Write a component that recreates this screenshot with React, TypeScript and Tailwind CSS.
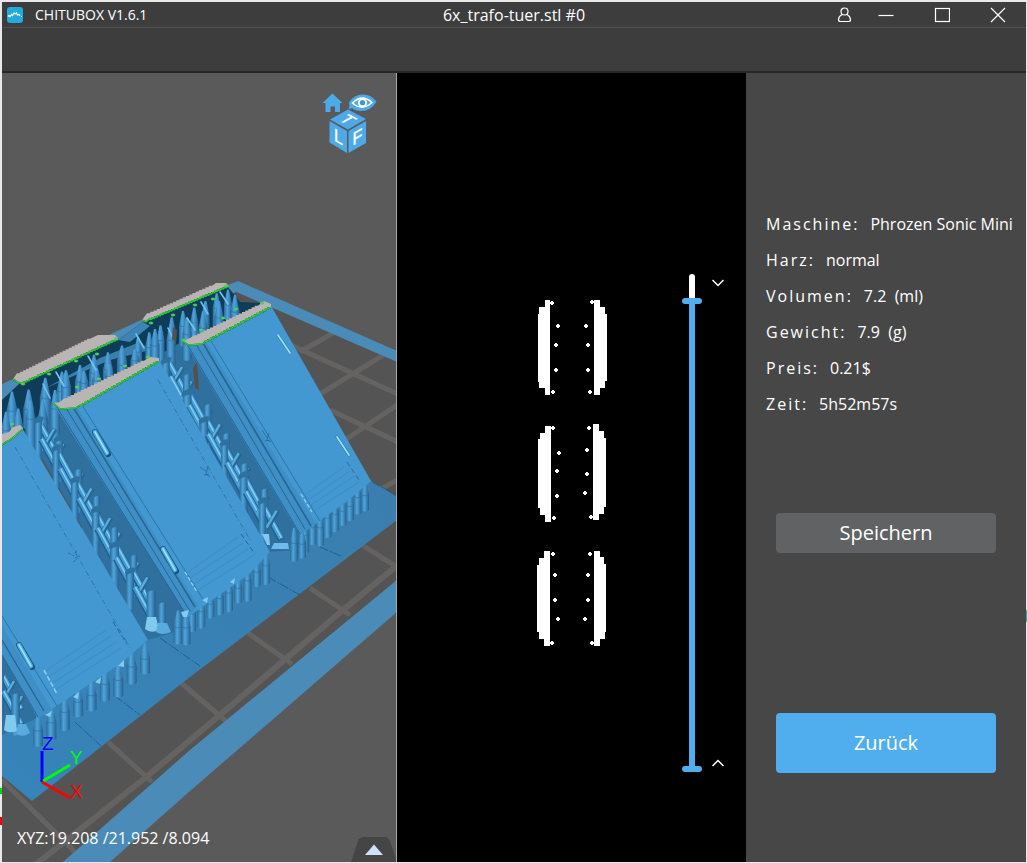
import { useState } from "react";
import type { ReactNode } from "react";

type Pt = [number, number];

const pts = (list: Pt[]) => list.map((p) => p.join(",")).join(" ");

/** Stair-stepped polyline between two points, as a sliced voxel edge looks. */
function stair(a: Pt, b: Pt, steps: number): Pt[] {
  const out: Pt[] = [];
  for (let i = 0; i < steps; i++) {
    const x0 = a[0] + ((b[0] - a[0]) * i) / steps;
    const x1 = a[0] + ((b[0] - a[0]) * (i + 1)) / steps;
    const y = a[1] + ((b[1] - a[1]) * (i + 0.5)) / steps;
    out.push([x0, y], [x1, y]);
  }
  return out;
}

const noise = (n: number) => {
  const v = Math.sin(n * 127.1 + 11.7) * 43758.5453;
  return v - Math.floor(v);
};

function Pillar({ x, y, h, w = 8 }: { x: number; y: number; h: number; w?: number }) {
  const r = w / 2;
  const tip = Math.min(w * 1.8, h * 0.5);
  return (
    <g>
      <path
        d={`M${x - 1} ${y} L${x + 1} ${y} L${x + r} ${y + tip} V${y + h} Q${x} ${y + h + 3} ${x - r} ${y + h} V${y + tip} Z`}
        fill="url(#pillar)"
      />
      <path d={`M${x - r} ${y + tip} Q${x} ${y + tip + 2.5} ${x + r} ${y + tip}`} stroke="#2b6c99" strokeWidth="0.6" fill="none" />
    </g>
  );
}

/** A flat-topped column with a tilted cap. */
function Column({ x, y, h, w = 8 }: { x: number; y: number; h: number; w?: number }) {
  const r = w / 2;
  return (
    <g>
      <path d={`M${x - r} ${y} L${x + r} ${y - 1} V${y + h} Q${x} ${y + h + 4} ${x - r} ${y + h} Z`} fill="url(#pillar)" />
      <path d={`M${x - r - 1} ${y + 1} Q${x - 1} ${y - 5} ${x + r + 2} ${y - 3} L${x + r} ${y + 3} Q${x} ${y + 1} ${x - r} ${y + 5} Z`} fill="#2e719f" />
    </g>
  );
}

/** Columns and diagonal braces filling the gap between two slabs. */
function Lattice({ a, b, span, count, seed }: { a: Pt; b: Pt; span: number; count: number; seed: number }) {
  const dx = (b[0] - a[0]) / count;
  const dy = (b[1] - a[1]) / count;
  return (
    <g>
      {Array.from({ length: count }, (_, i) => {
        const cx = a[0] + dx * i;
        const cy = a[1] + dy * i;
        const n = noise(seed + i);
        const m = noise(seed + i + 50);
        const side = i % 2 ? 1 : -1;
        const bx = cx - span * 0.3 - side * 4;
        return (
          <g key={i}>
            <line x1={bx} y1={cy + 1} x2={bx + 18} y2={cy + 34} stroke="#245f8a" strokeWidth="7" />
            <line x1={bx} y1={cy} x2={bx + 18} y2={cy + 33} stroke="#449bd3" strokeWidth="5" />
            <line x1={bx + 0.5} y1={cy} x2={bx + 18} y2={cy + 32} stroke="#86cff5" strokeWidth="1.5" />
            {i % 3 !== 2 && (
              <g>
                <line x1={cx + 11} y1={cy + 5} x2={cx + 1} y2={cy + 22} stroke="#286792" strokeWidth="5" />
                <line x1={cx + 10} y1={cy + 5} x2={cx} y2={cy + 22} stroke="#58aee1" strokeWidth="2.4" />
              </g>
            )}
            <Column x={cx + side * span * 0.22 + (n - 0.5) * 4} y={cy - 6 + m * 8} h={36 + n * 14} w={7 + m * 2} />
          </g>
        );
      })}
    </g>
  );
}

function PillarRow({ a, b, count, h, w = 7, seed = 0 }: { a: Pt; b: Pt; count: number; h: number; w?: number; seed?: number }) {
  return (
    <g>
      {Array.from({ length: count }, (_, i) => {
        const t = i / (count - 1);
        return (
          <Pillar
            key={i}
            x={a[0] + (b[0] - a[0]) * t}
            y={a[1] + (b[1] - a[1]) * t + (noise(seed + i) - 0.5) * 6}
            h={h + (noise(seed + i + 9) - 0.5) * 8}
            w={w}
          />
        );
      })}
    </g>
  );
}

function CutFace({ top, bottom }: { top: Pt[]; bottom: Pt[] }) {
  return (
    <g>
      <polygon points={pts([...top, ...[...bottom].reverse()])} fill="#b9b5b4" />
      <polyline points={pts(bottom)} fill="none" stroke="#1c7a30" strokeWidth="1.6" />
      <polyline points={pts(bottom)} fill="none" stroke="#2bdc33" strokeWidth="1" />
    </g>
  );
}

function Grip({ x, y, light = false }: { x: number; y: number; light?: boolean }) {
  return (
    <g strokeLinecap="round">
      {!light && <line x1={x} y1={y} x2={x + 13} y2={y + 22} stroke="#1c4f74" strokeWidth="6" />}
      <line x1={x} y1={y} x2={x + 12} y2={y + (light ? 18 : 21)} stroke={light ? "#2f78ab" : "#4ba6dd"} strokeWidth={light ? 3 : 4.6} />
      <line x1={x} y1={y} x2={x + 12} y2={y + (light ? 18 : 21)} stroke="#9be0fb" strokeWidth="1.8" />
    </g>
  );
}

function Scene() {
  return (
    <svg className="block h-full w-full" viewBox="2 73 394 789" preserveAspectRatio="xMidYMid slice" role="img" aria-label="3D">
      <defs>
        <linearGradient id="pillar" x1="0" x2="1" y1="0" y2="0">
          <stop offset="0" stopColor="#2b6b99" />
          <stop offset="0.4" stopColor="#51a4da" />
          <stop offset="0.65" stopColor="#3c8bc3" />
          <stop offset="1" stopColor="#275f88" />
        </linearGradient>
        <linearGradient id="raft" x1="0" x2="1" y1="1" y2="0">
          <stop offset="0" stopColor="#3684ba" />
          <stop offset="1" stopColor="#3a7eae" />
        </linearGradient>
        <clipPath id="bed">
          <polygon points="234,290 397,362 397,580 190,750 63,862 2,862 2,395" />
        </clipPath>
      </defs>
      <rect x="0" y="60" width="400" height="810" fill="#5a5a5a" />
      <polygon points="234,290 397,362 397,580 190,750 63,862 2,862 2,395" fill="#545454" />

      <g clipPath="url(#bed)" stroke="#656362" strokeWidth="5">
        <line x1="280" y1="340" x2="400" y2="395" />
        <line x1="330" y1="410" x2="400" y2="443" />
        <line x1="300" y1="352" x2="333" y2="333" />
        <line x1="320" y1="394" x2="385" y2="354" />
        <line x1="345" y1="440" x2="400" y2="403" />
        <line x1="380" y1="490" x2="400" y2="478" />
        <line x1="362" y1="545" x2="400" y2="569" />
        <line x1="310" y1="588" x2="350" y2="615" />
        <line x1="248" y1="633" x2="292" y2="664" />
        <line x1="180" y1="682" x2="227" y2="722" />
        <line x1="108" y1="742" x2="152" y2="782" />
        <line x1="2" y1="780" x2="75" y2="852" />
        <path d="M400 563 L343 610 L220 715 L145 778 L35 865" fill="none" strokeWidth="6" />
      </g>
      <g fill="#4a8bb7">
        <polygon points="238,281 397,351 397,362 234,291" />
        <polygon points="238,281 150,316 2,384 2,400 150,328 236,292" />
        <polygon points="397,580 190,750 63,862 110,862 190,791 397,612" />
      </g>

      <polygon points="2,560 200,480 370,480 397,497 397,520 190,677 32,801 2,776" fill="url(#raft)" />
      <g stroke="#1d567f" strokeWidth="0.8" strokeDasharray="9 2 2 1">
        <line x1="320" y1="547" x2="343" y2="557" />
        <line x1="268" y1="577" x2="300" y2="595" />
        <line x1="160" y1="638" x2="200" y2="666" />
        <line x1="115" y1="696" x2="140" y2="715" />
        <line x1="75" y1="722" x2="101" y2="746" />
        <line x1="372" y1="482" x2="395" y2="494" />
      </g>

      {/* undersides behind the front slabs */}
      <polygon points="2,400 20,383 118,340 143,322 228,287 240,302 262,303 190,345 160,357 120,372 60,402 26,430 2,440" fill="#0e3c59" />
      <polygon points="46,388 110,360 150,350 140,342 100,358" fill="#3b7fad" />
      <polygon points="118,340 143,322 150,326 130,342" fill="#3d83b3" />

      {/* lattice between slabs */}
      <polygon points="150,360 183,341 200,330 300,533 300,550 268,552" fill="#2f709f" />
      <polygon points="24,427 55,403 188,617 190,628 147,640" fill="#2f709f" />
      <polygon points="2,648 37,718 2,735" fill="#2f709f" />

      <PillarRow a={[12, 394]} b={[62, 372]} count={4} h={36} w={11} seed={3} />
      <PillarRow a={[66, 368]} b={[122, 344]} count={5} h={34} w={10} seed={7} />
      <PillarRow a={[138, 335]} b={[228, 290]} count={9} h={32} w={8} seed={13} />
      <PillarRow a={[6, 412]} b={[55, 392]} count={5} h={48} w={10} seed={21} />
      <PillarRow a={[84, 372]} b={[135, 350]} count={5} h={24} w={9} seed={27} />
      <PillarRow a={[155, 330]} b={[235, 296]} count={6} h={42} w={9} seed={31} />
      <g stroke="#72c4ef" strokeWidth="1.6" strokeLinecap="round">
        <line x1="43" y1="384" x2="50" y2="398" />
        <line x1="56" y1="372" x2="64" y2="386" />
        <line x1="88" y1="356" x2="96" y2="370" />
        <line x1="136" y1="334" x2="144" y2="348" />
        <line x1="168" y1="328" x2="174" y2="340" />
        <line x1="187" y1="318" x2="195" y2="330" />
        <line x1="201" y1="302" x2="208" y2="314" />
        <line x1="220" y1="292" x2="228" y2="304" />
      </g>

      <Lattice a={[172, 362]} b={[276, 520]} span={24} count={11} seed={5} />
      <Lattice a={[44, 424]} b={[156, 602]} span={26} count={12} seed={71} />
      <Lattice a={[4, 676]} b={[20, 706]} span={16} count={2} seed={40} />
      <g fill="#54504e">
        <polygon points="193,368 197,362 199,390 195,388" />
        <polygon points="173,327 177,330 176,343 172,339" />
      </g>

      {/* flared feet */}
      <g>
        <Column x={151} y={588} h={30} w={9} />
        <Column x={162} y={600} h={24} w={8} />
        <path d="M147 617 h9 l3 13 q-8 4 -14 -1 z" fill="#80caf0" />
        <path d="M158 623 h9 l4 9 q-9 4 -15 0 z" fill="#5aabdd" />
        <path d="M6 715 h9 l2 16 q-8 3 -13 -1 z" fill="#80caf0" />
        <path d="M18 724 h8 l4 9 q-7 5 -14 1 z" fill="#5aabdd" />
        <path d="M262 534 h7 l1 11 h-3 z" fill="#80caf0" />
        <path d="M274 543 h14 l1 6 h-18 z" fill="#6dbbe8" />
      </g>

      <PillarRow a={[305, 520]} b={[365, 478]} count={9} h={30} w={8} seed={2} />
      <PillarRow a={[192, 600]} b={[266, 552]} count={9} h={31} w={8} seed={9} />
      <PillarRow a={[38, 714]} b={[145, 642]} count={9} h={32} w={10} seed={18} />
      <PillarRow a={[178, 612]} b={[186, 608]} count={2} h={32} w={9} seed={23} />
      <PillarRow a={[294, 530]} b={[302, 528]} count={2} h={30} w={8} seed={25} />

      {/* right slab */}
      <polygon points="186,344 270,304 371,481 346,502 300,535" fill="#4398d1" />
      <polygon points="186,344 206,341 316,524 300,535" fill="#3f8fc6" />
      <g stroke="#246694" strokeWidth="1" fill="none">
        <path d="M188 346 L300 534" />
        <path d="M196 344 L305 529" />
        <path d="M203 343 L311 526" strokeWidth="1.6" />
        <path d="M211 341 L320 521" strokeWidth="0.7" />
        <path d="M262 430 l5 8 m2 -5 l-2 7 4 2 M265 441 l5 -1" strokeWidth="0.8" />
      </g>
      <g stroke="#3d8dc3" strokeWidth="1">
        <path d="M302 497 L344 467 M305 502 L350 471 M308 507 L354 476 M312 512 L359 482" />
      </g>
      <path d="M301 494 l11 18" stroke="#88cff3" strokeWidth="1.4" strokeDasharray="4 2" />
      <path d="M347 462 l12 18" stroke="#286a98" strokeWidth="1" strokeDasharray="5 3" />
      <Grip x={278} y={335} light />
      <Grip x={337} y={437} light />

      {/* centre slab */}
      <polygon points="56,408 158,358 270,552 248,575 188,617" fill="#4398d1" />
      <polygon points="56,408 76,405 198,606 188,617" fill="#3f8fc6" />
      <g stroke="#246694" strokeWidth="1" fill="none">
        <path d="M58 409 L187 616" />
        <path d="M66 408 L190 611" />
        <path d="M73 407 L195 607" strokeWidth="1.5" />
        <path d="M82 405 L204 601" strokeWidth="0.7" />
        <path d="M158 380 L250 540" strokeWidth="0.7" strokeDasharray="5 2 1 3" />
        <path d="M200 467 l6 4 m2 -5 l-2 8 4 3 M204 475 l5 -1" strokeWidth="0.8" />
        <path d="M241 534 l14 20" strokeDasharray="5 3" />
      </g>
      <g stroke="#3d8dc3" strokeWidth="1">
        <path d="M184 575 L238 537 M187 580 L243 543 M191 586 L248 549 M195 592 L254 555" />
      </g>
      <path d="M185 572 l12 20" stroke="#88cff3" strokeWidth="1.4" strokeDasharray="4 2" />
      <Grip x={95} y={432} />
      <Grip x={163} y={549} />
      <g fill="#80cbf2">
        <polygon points="181,612 189,610 187,617 183,617" />
        <polygon points="202,600 208,597 207,603" />
        <polygon points="230,582 235,578 234,584" />
      </g>

      {/* front slab */}
      <polygon points="2,444 22,428 148,640 120,664 38,718 2,655" fill="#4398d1" />
      <polygon points="2,626 52,710 38,718 2,655" fill="#3f8fc6" />
      <g stroke="#246694" strokeWidth="1" fill="none">
        <path d="M2 655 L38 717" />
        <path d="M2 640 L44 711" strokeWidth="1.4" />
        <path d="M2 616 L57 706" strokeWidth="0.7" />
        <path d="M15 447 L130 648" strokeWidth="0.7" strokeDasharray="5 2 1 3" />
        <path d="M68 553 l6 3 m2 -6 l0 5 m-1 3 l5 -2 M73 562 l4 -3" strokeWidth="0.8" strokeDasharray="3 1" />
        <path d="M113 622 l14 22" strokeDasharray="5 3" />
      </g>
      <g stroke="#3d8dc3" strokeWidth="1">
        <path d="M44 672 L106 630 M47 678 L111 636 M51 684 L116 642 M55 690 L121 648" />
      </g>
      <path d="M44 670 l13 24" stroke="#88cff3" strokeWidth="1.6" strokeDasharray="5 2" />
      <Grip x={19} y={645} />
      <g fill="#80cbf2">
        <polygon points="45,715 52,711 50,717" />
        <polygon points="73,697 79,692 78,699" />
        <polygon points="95,682 101,677 100,684" />
        <polygon points="118,666 124,660 124,667" />
      </g>

      <CutFace
        top={[[13, 379], ...stair([17, 374], [90, 338], 24), [98, 335], [115, 335], [118, 338]]}
        bottom={[[13, 379], [17, 382], ...stair([21, 384], [118, 339], 34)]}
      />
      <CutFace
        top={[[142, 320], ...stair([147, 314], [212, 285], 20), [216, 283], [226, 283], [229, 286]]}
        bottom={[[142, 320], [146, 322], ...stair([149, 320], [229, 286], 28)]}
      />
      <CutFace
        top={[[182, 341], [190, 338], ...stair([194, 336], [258, 305], 20), [264, 301], [271, 304]]}
        bottom={[[182, 341], [188, 345], [203, 344], ...stair([205, 342], [271, 307], 24)]}
      />
      <CutFace
        top={[[53, 403], [60, 402], ...stair([64, 399], [144, 360], 24), [150, 357], [159, 358]]}
        bottom={[[53, 403], [60, 409], [76, 408], ...stair([80, 406], [159, 361], 30)]}
      />
      <CutFace
        top={[[2, 434], [9, 432], [13, 427], [20, 425], [23, 428]]}
        bottom={[[2, 445], [6, 442], [10, 440], [14, 437], [18, 433], [23, 429]]}
      />
      <g fill="#9fae9f" stroke="#2bdc33" strokeWidth="0.8">
        {[
          [23, 384], [49, 374], [76, 361], [97, 354], [116, 339], [12, 424], [77, 387], [99, 379], [125, 366], [148, 357],
          [151, 323], [173, 315], [195, 305], [213, 299], [226, 286], [201, 330], [184, 340], [223, 318], [236, 309], [262, 303],
        ].map(([x, y]) => (
          <ellipse key={`${x}-${y}`} cx={x} cy={y} rx="2" ry="1" />
        ))}
      </g>

      {/* axis gizmo */}
      <g strokeWidth="3" fontFamily="'Liberation Sans', sans-serif" fontSize="19">
        <line x1="42" y1="782" x2="42" y2="751" stroke="#0000ff" />
        <line x1="43" y1="781" x2="70" y2="765" stroke="#00ff00" />
        <line x1="42" y1="782" x2="70" y2="798" stroke="#ff0000" />
        <g strokeWidth="0">
          <text x="42" y="750" fill="#0000ff">Z</text>
          <text x="70" y="764" fill="#00ff00">Y</text>
          <text x="70" y="798" fill="#ff0000">X</text>
        </g>
      </g>
    </svg>
  );
}

function ViewCube() {
  return (
    <svg className="block h-16 w-14" viewBox="321 91 56 64" aria-hidden="true">
      <path d="M332.500 93.500 L342.500 103 H340 V112 H335 V106.500 H330.500 V112 H325.500 V103 H322.500 Z" fill="#4da9e8" />
      <path d="M348.500 109.500 Q350 105 349 102.500 Q354 94.500 363 94.500 Q371 94.500 376.500 101.500 Q371 111 361 111 Q355 111 352 108 Z" fill="#4da9e8" />
      <path d="M352.500 103 Q362 93.500 372 102.500 Q362 111.500 352.500 103 Z" fill="#4da9e8" stroke="#fff" strokeWidth="1.5" />
      <circle cx="362.500" cy="102.700" r="4.600" fill="#fff" />
      <circle cx="362.500" cy="102.700" r="2.600" fill="#3b97d8" />
      <polygon points="348,109.500 366,119 348,129.500 330,119.500" fill="#4da9e8" />
      <polygon points="329.500,121 347,131 347,153 329.500,142.500" fill="#4da9e8" />
      <polygon points="366,121 348.500,131 348.500,153 366,143" fill="#4da9e8" />
      <g fill="#fff" stroke="#fff" strokeWidth="0.4" fontFamily="'Liberation Sans', sans-serif" fontSize="18" textAnchor="middle">
        <text transform="matrix(0.9 0.5 0 1 338.500 143)">L</text>
        <text transform="matrix(0.9 -0.5 0 1 357.500 143)">F</text>
        <text transform="matrix(0.85 0.45 -0.85 0.48 342.500 122.500)">T</text>
      </g>
    </svg>
  );
}

const SLICES: { left: string; right: string; dots: Pt[] }[] = [
  {
    left: "M545 300h5v95h-5v-7h-6v-6h-1v-68h1v-7h6z",
    right: "M594 300h6v7h5v7h2v67h-2v7h-5v7h-6z",
    dots: [[552, 303], [592, 302], [558, 326], [586, 326], [556, 345], [588, 345], [556, 370], [588, 370], [553, 392], [590, 392]],
  },
  {
    left: "M545 426h6v96h-6v-7h-5v-7h-2v-69h2v-6h5z",
    right: "M593 424h6v7h5v7h2v69h-2v7h-5v6h-6z",
    dots: [[553, 428], [589, 428], [559, 453], [587, 450], [557, 471], [587, 474], [557, 496], [585, 493], [554, 518], [591, 517]],
  },
  {
    left: "M544 551h6v95h-6v-7h-5v-7h-2v-67h2v-7h5z",
    right: "M594 551h6v6h4v7h2v68h-1v7h-5v7h-6z",
    dots: [[553, 554], [590, 554], [555, 575], [588, 575], [555, 600], [588, 600], [558, 619], [585, 619], [552, 643], [592, 643]],
  },
];

function LayerSlice() {
  return (
    <svg className="mt-6 block h-[350px] w-18 shrink-0" viewBox="536 298 72 350" fill="#fff" shapeRendering="crispEdges" role="img" aria-label="Layer">
      {SLICES.map((s, i) => (
        <g key={i}>
          <path d={s.left} />
          <path d={s.right} />
          {s.dots.map(([x, y]) => (
            <path key={`${x}-${y}`} d={`M${x - 2} ${y - 1}h1v-1h2v1h1v2h-1v1h-2v-1h-1z`} />
          ))}
        </g>
      ))}
    </svg>
  );
}

const RANGE =
  "pointer-events-none absolute inset-0 m-0 h-full w-5 appearance-none bg-transparent [direction:rtl] [writing-mode:vertical-lr] [&::-webkit-slider-thumb]:pointer-events-auto [&::-webkit-slider-thumb]:h-[6px] [&::-webkit-slider-thumb]:w-5 [&::-webkit-slider-thumb]:appearance-none [&::-webkit-slider-thumb]:rounded-full [&::-webkit-slider-thumb]:bg-[#50aeef]";

function LayerSlider() {
  const [low, setLow] = useState(0);
  const [high, setHigh] = useState(952);
  return (
    <div className="flex gap-[10px]">
      <div className="relative flex h-[498px] w-5 justify-center">
        <div className="flex w-[6px] flex-col justify-end rounded-full bg-white">
          <div className="rounded-full bg-[#50aeef]" style={{ height: `${(high - low) / 10}%`, marginBottom: `${low / 10}%` }} />
        </div>
        <input type="range" min={0} max={1000} value={low} onChange={(e) => setLow(Number(e.target.value))} aria-label="Lower layer" className={RANGE} />
        <input type="range" min={0} max={1000} value={high} onChange={(e) => setHigh(Number(e.target.value))} aria-label="Upper layer" className={RANGE} />
      </div>
      <div className="flex flex-col justify-between py-[5px]">
        <button type="button" aria-label="Layer down" onClick={() => setHigh(Math.max(low, high - 1))}>
          <svg className="block h-2 w-3" viewBox="0 0 12 8" fill="none" stroke="#fff" strokeWidth="1.5">
            <path d="M0.500 1 L6 6.500 L11.500 1" />
          </svg>
        </button>
        <button type="button" aria-label="Layer up" onClick={() => setHigh(Math.min(1000, high + 1))}>
          <svg className="block h-2 w-3" viewBox="0 0 12 8" fill="none" stroke="#fff" strokeWidth="1.5">
            <path d="M0.500 7 L6 1.500 L11.500 7" />
          </svg>
        </button>
      </div>
    </div>
  );
}

function WindowButton({ label, children }: { label: string; children: ReactNode }) {
  return (
    <button type="button" aria-label={label} className="flex h-6 w-4 items-center justify-center">
      <svg className="h-4 w-4" viewBox="0 0 16 16" fill="none" stroke="#fff" strokeWidth="1.2">
        {children}
      </svg>
    </button>
  );
}

const DETAILS: [string, string][] = [
  ["Maschine:", "Phrozen Sonic Mini"],
  ["Harz:", "normal"],
  ["Volumen:", "7.2  (ml)"],
  ["Gewicht:", "7.9  (g)"],
  ["Preis:", "0.21$"],
  ["Zeit:", "5h52m57s"],
];

export default function App() {
  return (
    <div className="relative flex min-h-screen flex-col border-t-2 border-r border-b border-l-2 border-[#e9e9ec] bg-[#5a5a5a] font-['Open_Sans','Noto_Sans',sans-serif] text-white">
      <span className="absolute bottom-[68px] -left-[2px] h-[6px] w-[2px] bg-[#00e000]" />
      <span className="absolute bottom-[37px] -left-[2px] h-2 w-[2px] bg-[#f00000]" />
      <span className="absolute -right-px bottom-[240px] h-3 w-px bg-[#19b5c9]" />

      <header className="grid h-[26px] grid-cols-[1fr_auto_1fr] items-center border-b border-[#505050] bg-[#3d3d3d]">
        <div className="flex items-center gap-3 pl-[5px]">
          <svg className="h-4 w-4" viewBox="0 0 16 16" aria-hidden="true">
            <rect width="16" height="16" rx="3" fill="#1fabdd" />
            <path d="M1 9.500 L2 8.500 L3 9.500 L4.500 7.500 L5.500 8.500 L7 6 L8 7 L9.500 6 L10.500 8 L12 7.500 L13 9 M14 9.500h1" fill="none" stroke="#fff" strokeWidth="1.200" />
          </svg>
          <span className="text-sm">CHITUBOX V1.6.1</span>
        </div>
        <h1 className="text-base">6x_trafo-tuer.stl #0</h1>
        <div className="flex items-center justify-end pr-5">
          <div className="mr-[26px]">
            <WindowButton label="Account">
              <circle cx="8.500" cy="4.500" r="3.500" />
              <path d="M6 7.500 Q2.500 9.500 2.500 12.500 Q2.500 14.500 4.500 14.500 H12.500 Q14.500 14.500 14.500 12.500 Q14.500 9.500 11 7.500" />
            </WindowButton>
          </div>
          <div className="flex gap-10">
            <WindowButton label="Minimize">
              <path d="M0.500 8.500 H15.500" />
            </WindowButton>
            <WindowButton label="Maximize">
              <rect x="1.500" y="1.500" width="14" height="13" />
            </WindowButton>
            <WindowButton label="Close">
              <path d="M1 1 L15 15 M15 1 L1 15" />
            </WindowButton>
          </div>
        </div>
      </header>
      <div className="h-[45px] border-b-2 border-[#272727] bg-[#3d3d3d]" />

      <main className="grid flex-1 grid-cols-[395fr_349fr_280px] items-stretch">
        <section className="relative border-r border-[#a8a8a8]">
          <div className="absolute inset-0 overflow-hidden">
            <Scene />
          </div>
          <button type="button" aria-label="View" className="absolute top-[18px] right-[19px]">
            <ViewCube />
          </button>
          <p className="absolute bottom-3 left-[15px] text-base">XYZ:19.208 /21.952 /8.094</p>
          <button type="button" aria-label="Expand" className="absolute right-0 bottom-0">
            <svg className="block h-[25px] w-[45px]" viewBox="0 0 45 25">
              <path d="M0 25 L7 4 Q8.500 0 13 0 H33 Q37 0 39 4 L45 22 V25 Z" fill="#454545" />
              <path d="M14 18 L23 7.500 L32 18 Z" fill="#cfe0fb" />
            </svg>
          </button>
        </section>

        <section className="flex items-start justify-end gap-[74px] bg-black pt-[201px] pr-[22px]">
          <LayerSlice />
          <LayerSlider />
        </section>

        <aside className="flex flex-col bg-[#474747] pt-[133px] pb-10">
          <dl className="pl-5 text-base">
            {DETAILS.map(([name, value]) => (
              <div key={name} className="flex h-9 items-center gap-[11px]">
                <dt className="tracking-[2px]">{name}</dt>
                <dd className="whitespace-pre">{value}</dd>
              </div>
            ))}
          </dl>
          <div className="mt-[91px] flex flex-col gap-40 px-[30px] text-xl">
            <button type="button" className="h-10 rounded-sm bg-[#606264]">
              Speichern
            </button>
            <button type="button" className="h-15 rounded-sm bg-[#50aeef]">
              Zurück
            </button>
          </div>
        </aside>
      </main>
    </div>
  );
}
